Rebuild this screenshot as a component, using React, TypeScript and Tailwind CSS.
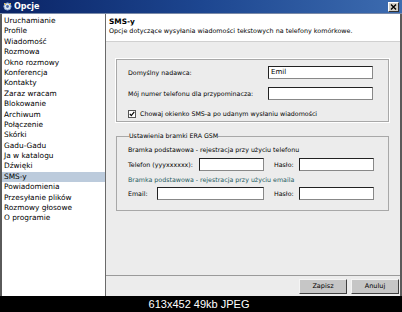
import React from 'react'

const menuItems = [
    "Uruchamianie",
    "Profile",
    "Wiadomość",
    "Rozmowa",
    "Okno rozmowy",
    "Konferencja",
    "Kontakty",
    "Zaraz wracam",
    "Blokowanie",
    "Archiwum",
    "Połączenie",
    "Skórki",
    "Gadu-Gadu",
    "Ja w katalogu",
    "Dźwięki",
    "SMS-y",
    "Powiadomienia",
    "Przesyłanie plików",
    "Rozmowy głosowe",
    "O programie",
]

function TextBox({ value, className }: { value?: string, className: string }) {
    return (
        <div className={"h-[13px] bg-white border border-t-[#222] border-l-[#222] border-r-[#888] border-b-[#888] pl-[2px] text-[7px] leading-[11px] text-black " + className}>
            {value}
        </div>
    )
}

function Button({ label }: { label: string }) {
    return (
        <div className="w-[48px] h-[15px] bg-[#c6c6c6] border border-t-[#f4f4f4] border-l-[#f4f4f4] border-r-[#404040] border-b-[#404040] flex items-center justify-center text-[6.5px] text-black">
            {label}
        </div>
    )
}

export default function App() {
    return (
        <div className="w-[402px] h-[312px] flex flex-col bg-black overflow-hidden" style={{ fontFamily: '"DejaVu Sans", Verdana, sans-serif' }}>
            {/* title bar */}
            <div className="h-[14px] flex items-center bg-gradient-to-r from-[#0b2466] via-[#1d4690] to-[#3d6cb0] pl-[3px] pr-[3px] border-b border-[#7a8aa8]">
                <svg width="9" height="9" viewBox="0 0 9 9">
                    <circle cx="4.5" cy="4.5" r="3.6" fill="#d8e4f4" stroke="#8aa6d0" strokeWidth="1" />
                    <circle cx="4.5" cy="4.5" r="1.4" fill="#4a6aa8" />
                    <path d="M1 1 L3 3 M8 1 L6 3" stroke="#f0c040" strokeWidth="1" />
                </svg>
                <span className="ml-[2px] text-white font-bold text-[8px] leading-none">Opcje</span>
                <div className="ml-auto w-[11px] h-[10px] bg-[#d4d0c8] border border-t-white border-l-white border-r-[#303030] border-b-[#303030] flex items-center justify-center">
                    <svg width="7" height="6" viewBox="0 0 7 6">
                        <path d="M1 0.5 L6 5.5 M6 0.5 L1 5.5" stroke="#000" strokeWidth="1.4" />
                    </svg>
                </div>
            </div>

            {/* body */}
            <div className="h-[282px] flex bg-[#5a5a5a] pl-[2px] pr-[2px]">
                <div className="w-[104px] bg-white border-r border-[#6a6a6a] pt-[2px]">
                    {menuItems.map((item, index) => (
                        <div key={index}
                            className={"h-[10.4px] pl-[2px] text-[7.4px] leading-[10.4px] text-black whitespace-nowrap " + (item === "SMS-y" ? "bg-[#bccbdc]" : "")}>
                            {item}
                        </div>
                    ))}
                </div>

                <div className="flex-1 flex flex-col bg-[#ececec] text-[6.3px] text-black">
                    <div className="h-[28px] bg-white border-b border-[#d0d0d0] pl-[3px] pt-[3px]">
                        <div className="font-bold text-[7.4px] leading-[10px]">SMS-y</div>
                        <div className="leading-[9px] text-[6.4px]">Opcje dotyczące wysyłania wiadomości tekstowych na telefony komórkowe.</div>
                    </div>

                    <div className="mt-[17px] ml-[10px] mr-[11px] h-[63px] border border-[#a8a8a8] outline outline-1 outline-white pl-[11px] pr-[15px] pt-[6px] flex flex-col">
                        <div className="flex items-center h-[13px]">
                            <span>Domyślny nadawca:</span>
                            <TextBox value="Emil" className="ml-auto w-[105px]" />
                        </div>
                        <div className="flex items-center h-[13px] mt-[8px]">
                            <span>Mój numer telefonu dla przypominacza:</span>
                            <TextBox className="ml-auto w-[105px]" />
                        </div>
                        <div className="flex items-center h-[9px] mt-[9px]">
                            <svg width="8" height="8" viewBox="0 0 8 8" className="shrink-0">
                                <rect x="0.5" y="0.5" width="7" height="7" fill="#fff" stroke="#555" />
                                <path d="M1.8 3.8 L3.3 5.6 L6.3 1.9" stroke="#000" strokeWidth="1.2" fill="none" />
                            </svg>
                            <span className="ml-[4px]">Chowaj okienko SMS-a po udanym wysłaniu wiadomości</span>
                        </div>
                    </div>

                    <fieldset className="mt-[10px] ml-[10px] mr-[11px] h-[79px] border border-[#a8a8a8] pl-[11px] pr-[14px] flex flex-col">
                        <legend className="ml-[1px] px-0 leading-[8px]">Ustawienia bramki ERA GSM</legend>
                        <div className="leading-[9px] mt-[5px]">Bramka podstawowa - rejestracja przy użyciu telefonu</div>
                        <div className="flex items-center h-[13px] mt-[4px]">
                            <span className="w-[71px]">Telefon (yyyxxxxxx):</span>
                            <TextBox className="w-[65px]" />
                            <span className="ml-[10px]">Hasło:</span>
                            <TextBox className="ml-auto w-[75px]" />
                        </div>
                        <div className="leading-[9px] mt-[4px] text-[#1f5a5e]">Bramka podstawowa - rejestracja przy użyciu emaila</div>
                        <div className="flex items-center h-[13px] mt-[3px]">
                            <span className="w-[29px]">Email:</span>
                            <TextBox className="w-[107px]" />
                            <span className="ml-[10px]">Hasło:</span>
                            <TextBox className="ml-auto w-[75px]" />
                        </div>
                    </fieldset>

                    <div className="mt-auto border-t border-[#9a9a9a] h-[21px] flex items-start justify-end gap-[4px] pt-[3px] pr-[1px]">
                        <Button label="Zapisz" />
                        <Button label="Anuluj" />
                    </div>
                </div>
            </div>

            {/* caption */}
            <div className="flex-1 flex items-center justify-center text-white text-[11px] leading-none pr-[4px]" style={{ fontFamily: '"Liberation Sans", Arial, sans-serif' }}>
                613x452 49kb JPEG
            </div>
        </div>
    )
}
